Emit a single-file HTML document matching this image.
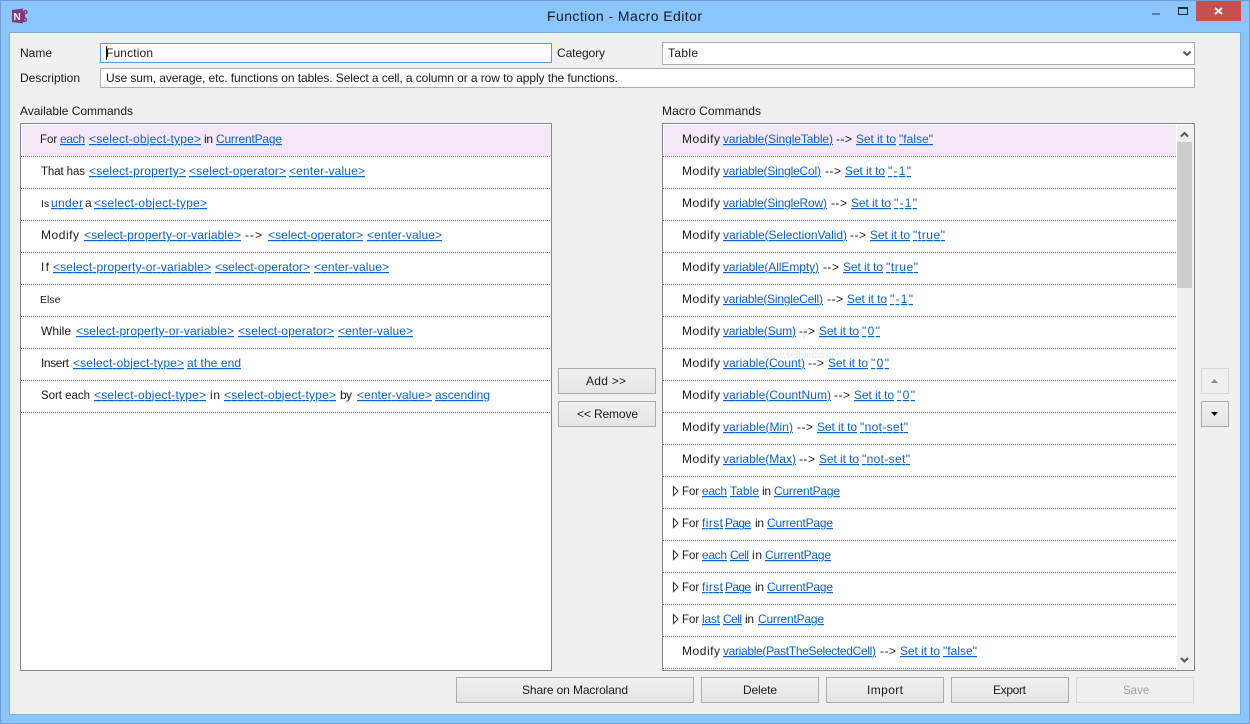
<!DOCTYPE html>
<html><head><meta charset="utf-8"><title>Function - Macro Editor</title>
<style>
html,body{margin:0;padding:0;background:#8ac6fd}
body{width:1250px;height:724px;overflow:hidden;position:relative}
svg{position:absolute;left:0;top:0}
text{font-family:"Liberation Sans",sans-serif;font-size:12px;fill:#1a1a1a}
.l{fill:#0a62c8;text-decoration:underline}
.d{stroke:#6a6a6a;stroke-width:1;stroke-dasharray:1 1}
</style></head><body>
<svg width="1250" height="724" viewBox="0 0 1250 724" xmlns="http://www.w3.org/2000/svg">
<defs><linearGradient id="g" x1="0" y1="0" x2="0" y2="1"><stop offset="0" stop-color="#f0f0f0"/><stop offset="1" stop-color="#e5e5e5"/></linearGradient></defs>
<!-- window -->
<rect x="0.5" y="0.5" width="1249" height="723" fill="#8ac6fd" stroke="#6f9fd2"/>
<rect x="9.5" y="32.5" width="1231" height="682" fill="#f0f0f0" stroke="#7cacdc"/>
<rect x="1196" y="1" width="45" height="20" fill="#c75050"/>
<path d="M1215 8l7 6m0-6l-7 6" stroke="#fff" stroke-width="2" fill="none"/>
<rect x="1152" y="13" width="8" height="2" fill="#5a7ea6"/>
<rect x="1178.500" y="8.500" width="9" height="6" fill="none" stroke="#1f2a36" stroke-width="1"/><rect x="1178" y="7" width="10" height="2" fill="#1f2a36"/>
<!-- app icon -->
<path d="M12 10l11-1.500v15l-11-1.500z" fill="#80397b"/><rect x="22" y="11" width="3" height="11" fill="#80397b"/>
<text x="13.500" y="20" style="font-size:10px;font-weight:bold;fill:#fff">N</text>
<circle cx="25.500" cy="12" r="2.200" fill="#80397b"/><circle cx="25" cy="19.500" r="2.200" fill="#80397b"/>
<circle cx="25.500" cy="12" r="0.700" fill="#d8c0d8"/><circle cx="25" cy="19.500" r="0.700" fill="#d8c0d8"/>
<text x="547" y="21" textLength="155" style="font-size:14px">Function - Macro Editor</text>

<!-- top form -->
<text x="20" y="57" textLength="32">Name</text>
<text x="20" y="82" textLength="60">Description</text>
<text x="557" y="57" textLength="48">Category</text>
<text x="20" y="115" textLength="113">Available Commands</text>
<text x="662" y="115" textLength="99">Macro Commands</text>
<rect x="100.500" y="43.500" width="451" height="19" fill="#fff" stroke="#569de5"/>
<rect x="106" y="46" width="1" height="14" fill="#111"/>
<text x="106" y="57" textLength="47">Function</text>
<rect x="662.500" y="42.500" width="532" height="22" fill="#fff" stroke="#acacac"/>
<text x="668" y="57" textLength="30">Table</text>
<path d="M1183.500 51.500l3.500 3.500 3.500-3.500" stroke="#555" stroke-width="2" fill="none"/>
<rect x="100.500" y="68.500" width="1094" height="19" fill="#fff" stroke="#acacac"/>
<text x="106" y="82" textLength="512">Use sum, average, etc. functions on tables. Select a cell, a column or a row to apply the functions.</text>

<!-- left list -->
<rect x="20.500" y="123.500" width="531" height="547" fill="#fff" stroke="#828790"/>
<rect x="22" y="125" width="529" height="31" fill="#f5e8f6"/>
<path class="d" d="M21 156.500H551M21 188.500H551M21 220.500H551M21 252.500H551M21 284.500H551M21 316.500H551M21 348.500H551M21 380.500H551M21 412.500H551"/>

<text x="40" y="143" style="font-size:11.500px">For</text><text class="l" x="60" y="143" textLength="25">each</text><text class="l" x="89" y="143" textLength="112">&lt;select-object-type&gt;</text><text x="204" y="143" textLength="9">in</text><text class="l" x="216" y="143" textLength="66">CurrentPage</text>

<text x="41" y="175" style="font-size:11.500px" textLength="44">That has</text><text class="l" x="89" y="175" textLength="97">&lt;select-property&gt;</text><text class="l" x="189" y="175" textLength="97">&lt;select-operator&gt;</text><text class="l" x="289" y="175" textLength="76">&lt;enter-value&gt;</text>

<text x="41" y="207" style="font-size:10.500px">Is</text><text class="l" x="51" y="207" textLength="32">under</text><text x="85" y="207" textLength="6">a</text><text class="l" x="94" y="207" textLength="113">&lt;select-object-type&gt;</text>

<text x="41" y="239" textLength="38">Modify</text><text class="l" x="84" y="239" textLength="157">&lt;select-property-or-variable&gt;</text><text x="245" y="239" textLength="17">--&gt;</text><text class="l" x="268" y="239" textLength="95">&lt;select-operator&gt;</text><text class="l" x="367" y="239" textLength="75">&lt;enter-value&gt;</text>

<text x="41" y="271" textLength="8">If</text><text class="l" x="53" y="271" textLength="158">&lt;select-property-or-variable&gt;</text><text class="l" x="215" y="271" textLength="95">&lt;select-operator&gt;</text><text class="l" x="314" y="271" textLength="75">&lt;enter-value&gt;</text>

<text x="40" y="303" style="font-size:10.500px">Else</text>

<text x="41" y="335" textLength="30">While</text><text class="l" x="76" y="335" textLength="158">&lt;select-property-or-variable&gt;</text><text class="l" x="238" y="335" textLength="96">&lt;select-operator&gt;</text><text class="l" x="338" y="335" textLength="75">&lt;enter-value&gt;</text>

<text x="41" y="367" textLength="28">Insert</text><text class="l" x="73" y="367" textLength="111">&lt;select-object-type&gt;</text><text class="l" x="187" y="367" textLength="54">at the end</text>

<text x="41" y="399" style="font-size:11.500px" textLength="49">Sort each</text><text class="l" x="94" y="399" textLength="112">&lt;select-object-type&gt;</text><text x="210" y="399" textLength="10">in</text><text class="l" x="224" y="399" textLength="112">&lt;select-object-type&gt;</text><text x="340" y="399" textLength="12">by</text><text class="l" x="357" y="399" textLength="75">&lt;enter-value&gt;</text><text class="l" x="435" y="399" textLength="55">ascending</text>

<!-- right list -->
<rect x="662.500" y="123.500" width="532" height="547" fill="#fff" stroke="#828790"/>
<rect x="664" y="125" width="512" height="31" fill="#f5e8f6"/>
<path class="d" d="M663 156.500H1176M663 188.500H1176M663 220.500H1176M663 252.500H1176M663 284.500H1176M663 316.500H1176M663 348.500H1176M663 380.500H1176M663 412.500H1176M663 444.500H1176M663 476.500H1176M663 508.500H1176M663 540.500H1176M663 572.500H1176M663 604.500H1176M663 636.500H1176M663 668.500H1176"/>
<!-- scrollbar -->
<rect x="1177" y="125" width="17" height="545" fill="#f0f0f0"/>
<rect x="1177" y="142" width="15" height="146" fill="#cdcdcd"/>
<path d="M1181 136.500l3.500-3.500 3.500 3.500" stroke="#555" stroke-width="2" fill="none"/>
<path d="M1181 658l3.500 3.500 3.500-3.500" stroke="#555" stroke-width="2" fill="none"/>

<!-- watermark -->
<text x="745" y="339" textLength="120" style="font-size:15px;font-weight:bold;fill:#efefef">SOFTPEDIA</text>
<text x="763" y="358" textLength="82" style="font-size:10px;fill:#e8e8e8">www.softpedia.com</text>

<text x="682" y="143" textLength="38">Modify</text><text class="l" x="723" y="143" textLength="110">variable(SingleTable)</text><text x="836" y="143" textLength="16">--&gt;</text><text class="l" x="856" y="143" textLength="40">Set it to</text><text class="l" x="899" y="143" textLength="34">"false"</text>

<text x="682" y="175" textLength="38">Modify</text><text class="l" x="723" y="175" textLength="98">variable(SingleCol)</text><text x="825" y="175" textLength="16">--&gt;</text><text class="l" x="845" y="175" textLength="40">Set it to</text><text class="l" x="888" y="175" textLength="23">"-1"</text>

<text x="682" y="207" textLength="38">Modify</text><text class="l" x="723" y="207" textLength="104">variable(SingleRow)</text><text x="831" y="207" textLength="16">--&gt;</text><text class="l" x="851" y="207" textLength="40">Set it to</text><text class="l" x="894" y="207" textLength="23">"-1"</text>

<text x="682" y="239" textLength="38">Modify</text><text class="l" x="723" y="239" textLength="124">variable(SelectionValid)</text><text x="850" y="239" textLength="16">--&gt;</text><text class="l" x="870" y="239" textLength="40">Set it to</text><text class="l" x="913" y="239" textLength="32">"true"</text>

<text x="682" y="271" textLength="38">Modify</text><text class="l" x="723" y="271" textLength="96">variable(AllEmpty)</text><text x="823" y="271" textLength="16">--&gt;</text><text class="l" x="843" y="271" textLength="40">Set it to</text><text class="l" x="886" y="271" textLength="32">"true"</text>

<text x="682" y="303" textLength="38">Modify</text><text class="l" x="723" y="303" textLength="100">variable(SingleCell)</text><text x="827" y="303" textLength="16">--&gt;</text><text class="l" x="847" y="303" textLength="40">Set it to</text><text class="l" x="890" y="303" textLength="23">"-1"</text>

<text x="682" y="335" textLength="38">Modify</text><text class="l" x="723" y="335" textLength="73">variable(Sum)</text><text x="799" y="335" textLength="16">--&gt;</text><text class="l" x="819" y="335" textLength="40">Set it to</text><text class="l" x="862" y="335" textLength="18">"0"</text>

<text x="682" y="367" textLength="38">Modify</text><text class="l" x="723" y="367" textLength="82">variable(Count)</text><text x="808" y="367" textLength="16">--&gt;</text><text class="l" x="828" y="367" textLength="40">Set it to</text><text class="l" x="871" y="367" textLength="18">"0"</text>

<text x="682" y="399" textLength="38">Modify</text><text class="l" x="723" y="399" textLength="108">variable(CountNum)</text><text x="834" y="399" textLength="16">--&gt;</text><text class="l" x="854" y="399" textLength="40">Set it to</text><text class="l" x="897" y="399" textLength="18">"0"</text>

<text x="682" y="431" textLength="38">Modify</text><text class="l" x="723" y="431" textLength="70">variable(Min)</text><text x="797" y="431" textLength="16">--&gt;</text><text class="l" x="817" y="431" textLength="40">Set it to</text><text class="l" x="860" y="431" textLength="48">"not-set"</text>

<text x="682" y="463" textLength="38">Modify</text><text class="l" x="723" y="463" textLength="73">variable(Max)</text><text x="799" y="463" textLength="16">--&gt;</text><text class="l" x="819" y="463" textLength="40">Set it to</text><text class="l" x="862" y="463" textLength="48">"not-set"</text>

<path d="M673.500 486.500l4.500 4.500-4.500 4.500zM673.500 518.500l4.500 4.500-4.500 4.500zM673.500 550.500l4.500 4.500-4.500 4.500zM673.500 582.500l4.500 4.500-4.500 4.500zM673.500 614.500l4.500 4.500-4.500 4.500z" fill="#fff" stroke="#333"/>

<text x="682" y="495" style="font-size:11.500px">For</text><text class="l" x="702" y="495" textLength="25">each</text><text class="l" x="730" y="495" textLength="29">Table</text><text x="762" y="495" textLength="9">in</text><text class="l" x="774" y="495" textLength="66">CurrentPage</text>

<text x="682" y="527" style="font-size:11.500px">For</text><text class="l" x="702" y="527" textLength="21">first</text><text class="l" x="725" y="527" textLength="26">Page</text><text x="755" y="527" textLength="9">in</text><text class="l" x="767" y="527" textLength="66">CurrentPage</text>

<text x="682" y="559" style="font-size:11.500px">For</text><text class="l" x="702" y="559" textLength="25">each</text><text class="l" x="730" y="559" textLength="19">Cell</text><text x="752" y="559" textLength="10">in</text><text class="l" x="765" y="559" textLength="66">CurrentPage</text>

<text x="682" y="591" style="font-size:11.500px">For</text><text class="l" x="702" y="591" textLength="21">first</text><text class="l" x="725" y="591" textLength="26">Page</text><text x="755" y="591" textLength="9">in</text><text class="l" x="767" y="591" textLength="66">CurrentPage</text>

<text x="682" y="623" style="font-size:11.500px">For</text><text class="l" x="702" y="623" textLength="18">last</text><text class="l" x="723" y="623" textLength="19">Cell</text><text x="745" y="623" textLength="9">in</text><text class="l" x="758" y="623" textLength="66">CurrentPage</text>

<text x="682" y="655" textLength="38">Modify</text><text class="l" x="723" y="655" textLength="153">variable(PastTheSelectedCell)</text><text x="880" y="655" textLength="16">--&gt;</text><text class="l" x="900" y="655" textLength="40">Set it to</text><text class="l" x="943" y="655" textLength="34">"false"</text>

<!-- buttons -->
<g fill="url(#g)" stroke="#acacac">
<rect x="558.500" y="368.500" width="97" height="25"/>
<rect x="558.500" y="401.500" width="97" height="25"/>
<rect x="1201.500" y="401.500" width="27" height="25"/>
<rect x="456.500" y="677.500" width="237" height="25"/>
<rect x="701.500" y="677.500" width="117" height="25"/>
<rect x="826.500" y="677.500" width="117" height="25"/>
<rect x="951.500" y="677.500" width="117" height="25"/>
</g>
<g fill="#f0f0f0" stroke="#d9d9d9">
<rect x="1201.500" y="368.500" width="27" height="25"/>
<rect x="1076.500" y="677.500" width="117" height="25"/>
</g>
<path d="M1211 383h7l-3.500-4z" fill="#8a8a8a"/>
<path d="M1211 412h7l-3.500 4z" fill="#000"/>
<text x="586" y="385" textLength="40">Add &gt;&gt;</text>
<text x="577" y="418" textLength="61">&lt;&lt; Remove</text>
<text x="522" y="694" textLength="106">Share on Macroland</text>
<text x="743" y="694" textLength="34">Delete</text>
<text x="867" y="694" textLength="36">Import</text>
<text x="993" y="694" textLength="33">Export</text>
<text x="1123" y="694" style="font-size:11.500px;fill:#a0a0a0">Save</text>
</svg>
</body></html>
